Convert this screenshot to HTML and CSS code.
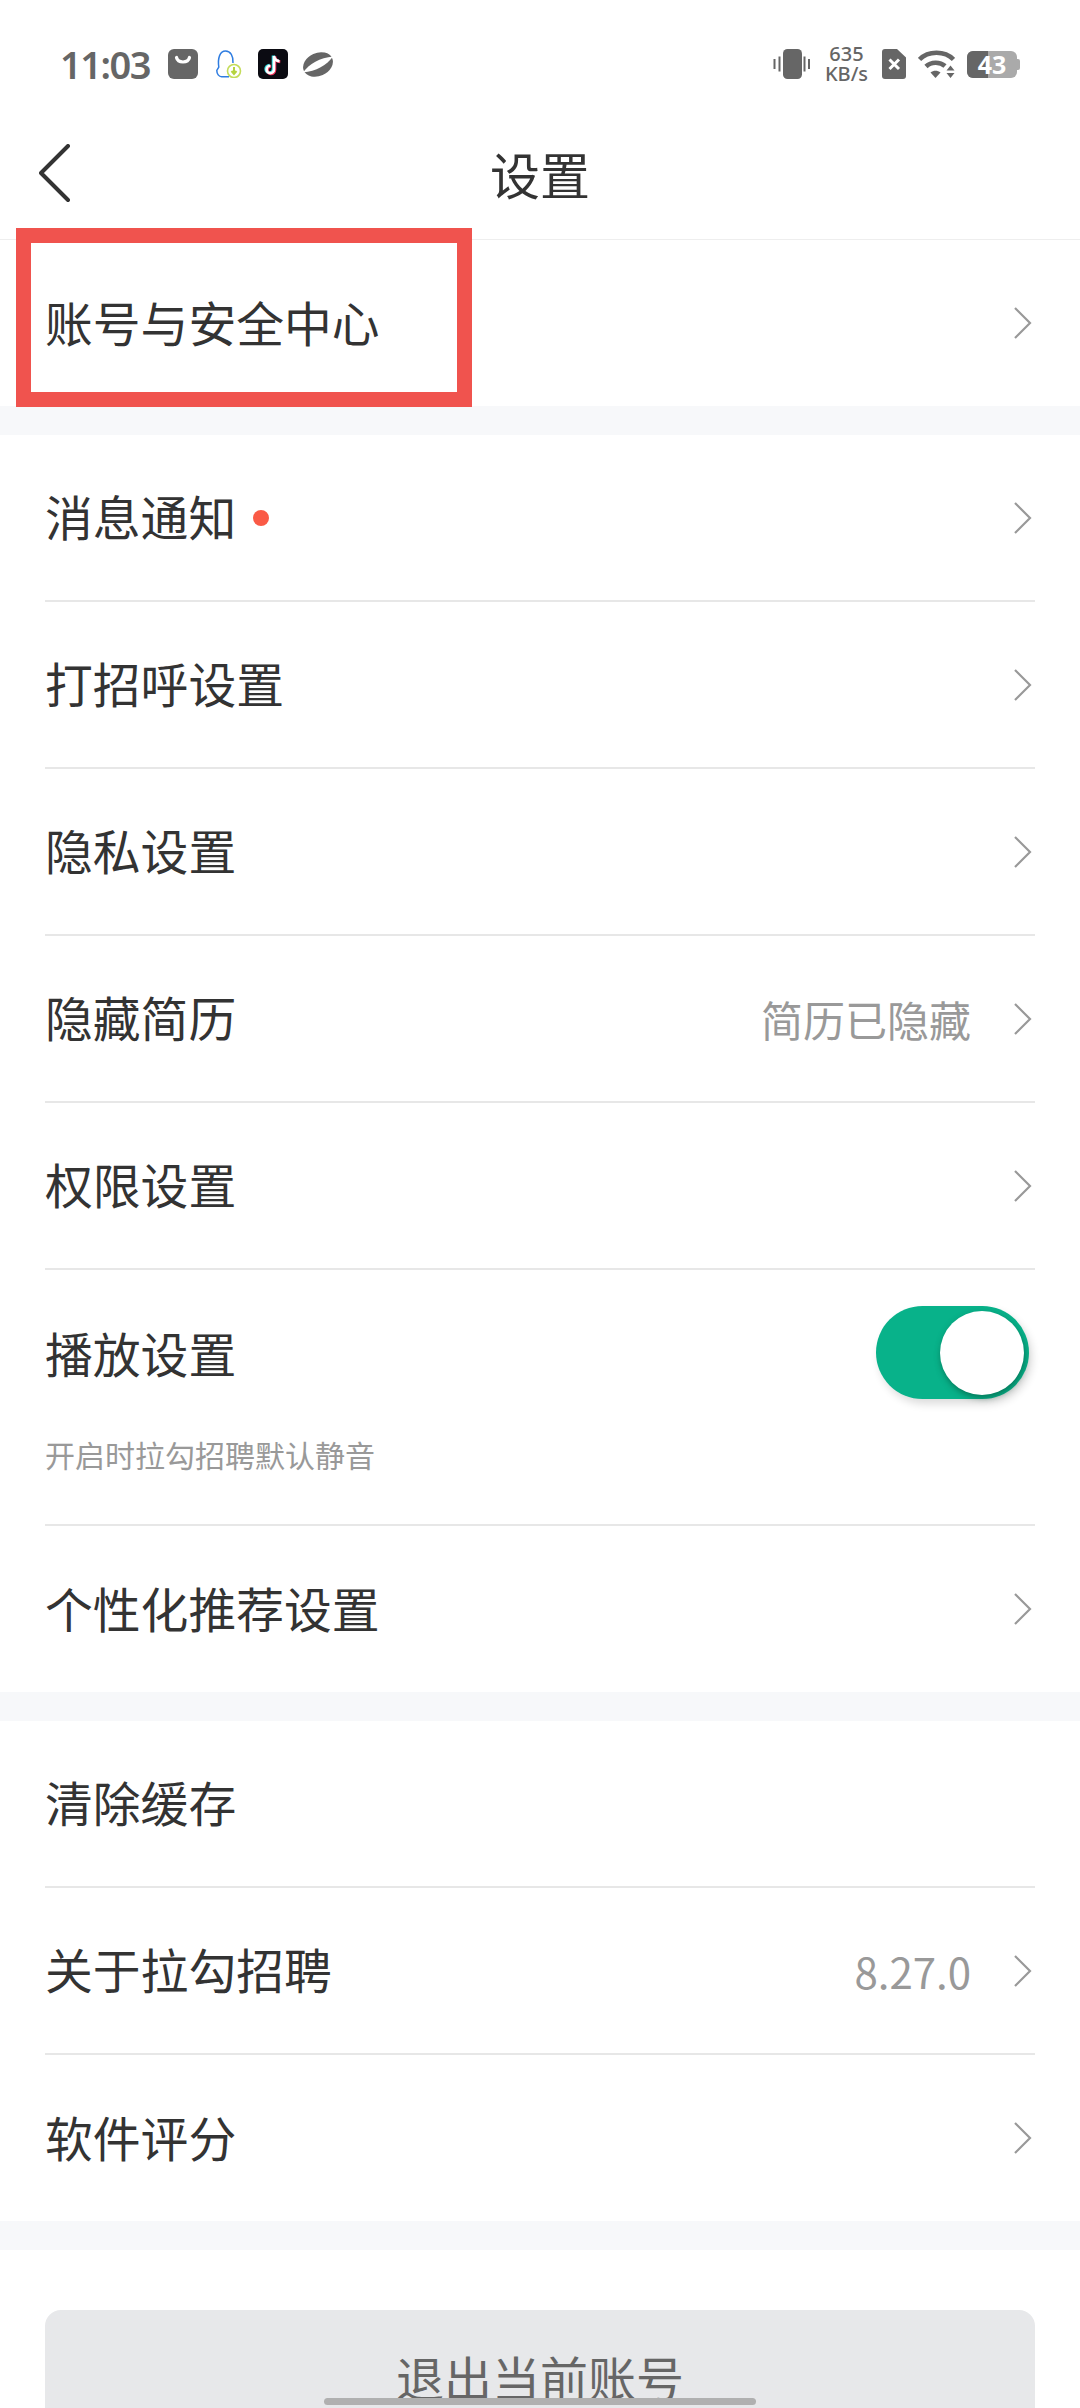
FILE: index.html
```html
<!DOCTYPE html>
<html lang="zh-CN">
<head>
<meta charset="utf-8">
<title>设置</title>
<link rel="stylesheet" href="styles.css">
</head>
<body>
<div class="page">
  <div class="status">
    <span class="time">11:03</span>
    <svg class="ic ic-bag" viewBox="0 0 30 30"><rect width="30" height="30" rx="6" fill="#666"/><path d="M8.500 8.500C10 14.500 20 14.500 21.500 8.500" fill="none" stroke="#fff" stroke-width="3.200" stroke-linecap="round"/></svg>
    <svg class="ic ic-qq" viewBox="0 0 26 28"><path d="M13 26.700H5.500C3 26.700 .8 24 .8 20.500l2-3.500C1.500 8 4 1 9.500 1c5 0 8 5 7.500 12" fill="none" stroke="#2f7de1" stroke-width="1.500"/><circle cx="18" cy="21" r="6.500" fill="#fff" stroke="#c4dc5a" stroke-width="1.600"/><path d="M18 17v6M15.500 21l2.500 3 2.500-3" fill="none" stroke="#b5d33f" stroke-width="2"/></svg>
    <svg class="ic ic-tt" viewBox="0 0 30 30"><rect width="30" height="30" rx="5" fill="#0b0b12"/><path d="M16 7v13.500a3.700 3.700 0 1 1-3.700-3.700M16 7c.5 3 2.500 5 5.500 5.300" fill="none" stroke="#31d6dc" stroke-width="3" transform="translate(-.8 -.5)"/><path d="M16 7v13.500a3.700 3.700 0 1 1-3.700-3.700M16 7c.5 3 2.500 5 5.500 5.300" fill="none" stroke="#f0305a" stroke-width="3" transform="translate(.8 .5)"/><path d="M16 7v13.500a3.700 3.700 0 1 1-3.700-3.700M16 7c.5 3 2.500 5 5.500 5.300" fill="none" stroke="#fff" stroke-width="2.600"/></svg>
    <svg class="ic ic-planet" viewBox="0 0 30 27"><ellipse cx="15" cy="13.500" rx="15.500" ry="11.500" transform="rotate(-24 15 13.500)" fill="#666"/><path d="M0 21.500C6 13 17 6.500 30 5.500C24 14 13 20.500 0 21.500z" fill="#fff"/></svg>
    <span class="status-fill"></span>
    <svg class="ic ic-vib" viewBox="0 0 37 30"><rect x="10" width="19" height="30" rx="4.500" fill="#666"/><path d="M1.500 10v10M6.500 7.500v15M31.500 7.500v15M36 10v10" stroke="#666" stroke-width="2"/></svg>
    <span class="speed"><span>635</span><span>KB/s</span></span>
    <svg class="ic ic-sim" viewBox="0 0 24 30"><path d="M3 0h12l9 8.500V27a3 3 0 0 1-3 3H3a3 3 0 0 1-3-3V3a3 3 0 0 1 3-3z" fill="#666"/><path d="M7.500 10.500l9.500 9.500M17 10.500L7.500 20" stroke="#fff" stroke-width="3"/></svg>
    <svg class="ic ic-wifi" viewBox="0 0 37 28"><path d="M1.500 9.500C10 .5 27 .5 35.500 9.500M8 16.500C13 11.500 22 11.500 27 16" fill="none" stroke="#666" stroke-width="4.600"/><path d="M12.500 22.500c3-2.500 7-2.500 10 0L17.500 28z" fill="#666"/><path d="M32.500 15.500l4 5h-8zM32.500 28l-4-5h8z" fill="#666"/></svg>
    <div class="battery"><span class="bat-fill"></span><span class="bat-num">43</span><span class="bat-cap"></span></div>
  </div>

  <header class="nav">
    <svg class="back" viewBox="0 0 32 60"><path d="M29 2L2 29l27 27" fill="none" stroke="#333" stroke-width="4" stroke-linecap="round" stroke-linejoin="round"/></svg>
    <h1 class="nav-title">设置</h1>
  </header>

  <ul class="group first">
    <li class="row"><span class="label">账号与安全中心</span><svg class="chev" viewBox="0 0 18 32"><path d="M1 1l15 15L1 31" fill="none" stroke="#999" stroke-width="2.200"/></svg></li>
  </ul>
  <div class="gap"></div>

  <ul class="group">
    <li class="row"><span class="label">消息通知</span><i class="dot"></i><svg class="chev" viewBox="0 0 18 32"><path d="M1 1l15 15L1 31" fill="none" stroke="#999" stroke-width="2.200"/></svg></li>
    <li class="row"><span class="label">打招呼设置</span><svg class="chev" viewBox="0 0 18 32"><path d="M1 1l15 15L1 31" fill="none" stroke="#999" stroke-width="2.200"/></svg></li>
    <li class="row"><span class="label">隐私设置</span><svg class="chev" viewBox="0 0 18 32"><path d="M1 1l15 15L1 31" fill="none" stroke="#999" stroke-width="2.200"/></svg></li>
    <li class="row"><span class="label">隐藏简历</span><span class="value">简历已隐藏</span><svg class="chev" viewBox="0 0 18 32"><path d="M1 1l15 15L1 31" fill="none" stroke="#999" stroke-width="2.200"/></svg></li>
    <li class="row"><span class="label">权限设置</span><svg class="chev" viewBox="0 0 18 32"><path d="M1 1l15 15L1 31" fill="none" stroke="#999" stroke-width="2.200"/></svg></li>
    <li class="row row-tall">
      <div class="row-main"><span class="label">播放设置</span><span class="toggle"><i class="knob"></i></span></div>
      <p class="hint">开启时拉勾招聘默认静音</p>
    </li>
    <li class="row last"><span class="label">个性化推荐设置</span><svg class="chev" viewBox="0 0 18 32"><path d="M1 1l15 15L1 31" fill="none" stroke="#999" stroke-width="2.200"/></svg></li>
  </ul>
  <div class="gap"></div>

  <ul class="group">
    <li class="row"><span class="label">清除缓存</span></li>
    <li class="row"><span class="label">关于拉勾招聘</span><span class="value">8.27.0</span><svg class="chev" viewBox="0 0 18 32"><path d="M1 1l15 15L1 31" fill="none" stroke="#999" stroke-width="2.200"/></svg></li>
    <li class="row last"><span class="label">软件评分</span><svg class="chev" viewBox="0 0 18 32"><path d="M1 1l15 15L1 31" fill="none" stroke="#999" stroke-width="2.200"/></svg></li>
  </ul>
  <div class="gap"></div>

  <div class="logout-wrap"><button class="logout">退出当前账号</button></div>

  <div class="highlight"></div>
  <div class="home-bar"></div>
</div>
</body>
</html>
```

FILE: styles.css
```css
* { box-sizing: border-box; }
html, body { margin: 0; padding: 0; background: #fff; }
body { font-family: "Noto Sans CJK SC", "Noto Sans", sans-serif; color: #333; }
.page { position: relative; width: 1080px; height: 2408px; overflow: hidden; background: #fff; }

.status { height: 112px; padding: 16px 63px 0 60px; display: flex; align-items: center; }
.time { font-family: "Noto Sans", sans-serif; font-size: 38px; font-weight: 600; color: #666; width: 108px; letter-spacing: -1.5px; }
.ic { display: block; flex: none; }
.ic-bag { width: 30px; height: 30px; }
.ic-qq { width: 26px; height: 28px; margin-left: 18px; }
.ic-tt { width: 30px; height: 30px; margin-left: 16px; }
.ic-planet { width: 30px; height: 27px; margin-left: 15px; }
.status-fill { flex: 1; }
.ic-vib { width: 37px; height: 30px; }
.speed { display: flex; flex-direction: column; align-items: center; margin-left: 15px; width: 43px; font-family: "Noto Sans", sans-serif; font-size: 20px; line-height: 20px; font-weight: 500; color: #666; }
.ic-sim { width: 24px; height: 30px; margin-left: 14px; }
.ic-wifi { width: 37px; height: 28px; margin-left: 12px; }
.battery { position: relative; width: 50px; height: 27px; margin-left: 12px; background: #aaa; border-radius: 6px; }
.bat-fill { position: absolute; left: 0; top: 0; width: 21px; height: 27px; background: #666; border-radius: 6px 0 0 6px; }
.bat-num { position: relative; display: block; text-align: center; font-family: "Noto Sans", sans-serif; font-weight: 700; font-size: 25px; line-height: 27px; color: #fff; }
.bat-cap { position: absolute; right: -3px; top: 8px; width: 3px; height: 11px; background: #aaa; border-radius: 0 2px 2px 0; }

.nav { position: relative; height: 128px; display: flex; align-items: center; justify-content: center; border-bottom: 1px solid #eee; }
.back { position: absolute; left: 39px; top: 32px; width: 32px; height: 60px; }
.nav-title { margin: 0; padding-bottom: 6px; font-size: 50px; font-weight: 400; color: #333; line-height: 1; }

.group { list-style: none; margin: 0; padding: 0 45px; }
.gap { height: 29px; background: #f7f8fa; }
.row { height: 167px; display: flex; align-items: center; border-bottom: 2px solid #e7e7e7; }
.first .row { height: 166px; border-bottom: 0; }
.row.last { border-bottom: 0; height: 166px; }
.label { padding-bottom: 3px; font-size: 47.8px; color: #333; line-height: 1; }
.value { margin-left: auto; font-size: 42px; color: #999; line-height: 1; }
.chev { width: 18px; height: 32px; margin-left: auto; margin-right: 3px; flex: none; }
.value + .chev { margin-left: 43px; }
.dot { width: 16px; height: 16px; margin-left: 17px; background: #fa5a46; border-radius: 50%; }

.row-tall { height: 256px; flex-direction: column; align-items: stretch; padding-top: 36px; }
.row-main { display: flex; align-items: center; justify-content: space-between; height: 93px; }
.row-main .label { margin-top: 4px; }
.hint { margin: 40px 0 0; font-size: 30px; line-height: 1; color: #999; }

.toggle { position: relative; width: 153px; height: 93px; margin-right: 6px; background: #08b28a; border-radius: 47px; box-shadow: 3px 5px 8px rgba(0,0,0,.14); }
.knob { position: absolute; right: 5px; top: 5px; width: 84px; height: 84px; background: #fff; border-radius: 50%; box-shadow: 1px 3px 6px rgba(0,60,40,.5); }

.logout-wrap { padding: 60px 45px 0; }
.logout { display: block; width: 100%; height: 132px; padding: 0; border: 0; border-radius: 16px; background: #e7e8ea; color: #666; font: 400 48px/1 "Noto Sans CJK SC", sans-serif; }

.highlight { position: absolute; left: 16px; top: 228px; width: 456px; height: 179px; border: 15px solid #f0534e; }
.home-bar { position: absolute; left: 324px; top: 2398px; width: 432px; height: 7px; background: #b0b0b0; border-radius: 4px; }
```
